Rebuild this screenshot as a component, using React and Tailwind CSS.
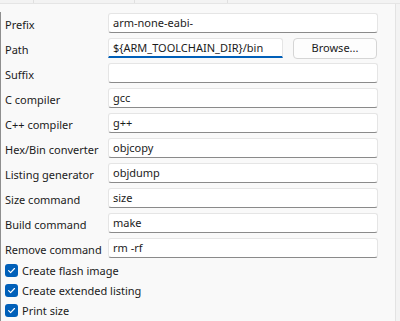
import React from 'react';

const fields = [
  { label: 'Prefix', value: 'arm-none-eabi-' },
  { label: 'Path', value: '${ARM_TOOLCHAIN_DIR}/bin', browse: true },
  { label: 'Suffix', value: '' },
  { label: 'C compiler', value: 'gcc' },
  { label: 'C++ compiler', value: 'g++' },
  { label: 'Hex/Bin converter', value: 'objcopy' },
  { label: 'Listing generator', value: 'objdump' },
  { label: 'Size command', value: 'size' },
  { label: 'Build command', value: 'make' },
  { label: 'Remove command', value: 'rm -rf' },
];

const checks = ['Create flash image', 'Create extended listing', 'Print size'];

const Check = () => (
  <span className="flex h-[13px] w-[13px] shrink-0 items-center justify-center rounded-[3px] bg-[#005fb8]">
    <svg width="9" height="9" viewBox="0 0 10 10" fill="none">
      <path d="M1.8 5.2 L4 7.3 L8.3 2.8" stroke="#fff" strokeWidth="1.3" strokeLinecap="round" strokeLinejoin="round" />
    </svg>
  </span>
);

export default function App() {
  return (
    <div
      className="flex h-[321px] w-[400px] flex-col overflow-hidden whitespace-nowrap bg-[#f3f3f3] text-[11px] text-[#1b1b1b]"
      style={{ fontFamily: '"Noto Sans", "Open Sans", sans-serif' }}
    >
      {/* tab strip bottoms */}
      <div className="flex h-[4px] shrink-0 border-b border-[#e5e5e5]">
        <div className="w-[34px] border-r border-[#e0e0e0]" />
        <div className="w-[101px] border-r border-[#e0e0e0]" />
        <div className="w-[93px] border-r border-[#e0e0e0]" />
      </div>
      <div className="flex flex-1">
        <div className="flex flex-1 flex-col border-r border-[#e3e3e3] bg-[#f9f9f9]">
          <div className="mt-[8px] flex flex-1 flex-col border-l border-[#8f8f8f] pl-[4px] pt-[1px]">
            <div className="flex flex-col gap-[5px]">
              {fields.map((f) => (
                <div key={f.label} className="flex h-[20px] items-center">
                  <span className="w-[103px] shrink-0 pt-[2px] leading-none">{f.label}</span>
                  {f.browse ? (
                    <div className="flex items-center gap-[10px]">
                      <div className="flex h-[20px] w-[175px] items-center rounded-t-[3px] border border-b-2 border-[#e5e5e5] border-b-[#005fb8] bg-white px-[4px] pt-[1px]">
                        {f.value}
                      </div>
                      <button className="flex h-[21px] w-[84px] items-center justify-center rounded-[4px] border border-[#d5d5d5] bg-[#fdfdfd]">
                        Browse...
                      </button>
                    </div>
                  ) : (
                    <div className="flex h-[20px] w-[270px] items-center rounded-[3px] border border-[#e5e5e5] border-b-[#8a8a8a] bg-white px-[4px] pt-[1px]">
                      {f.value}
                    </div>
                  )}
                </div>
              ))}
            </div>
            <div className="mt-[6px] flex flex-col gap-[7px]">
              {checks.map((c) => (
                <label key={c} className="flex h-[13px] items-center gap-[4px]">
                  <Check />
                  <span className="leading-none">{c}</span>
                </label>
              ))}
            </div>
          </div>
        </div>
        <div className="w-[4px] shrink-0" />
      </div>
    </div>
  );
}
